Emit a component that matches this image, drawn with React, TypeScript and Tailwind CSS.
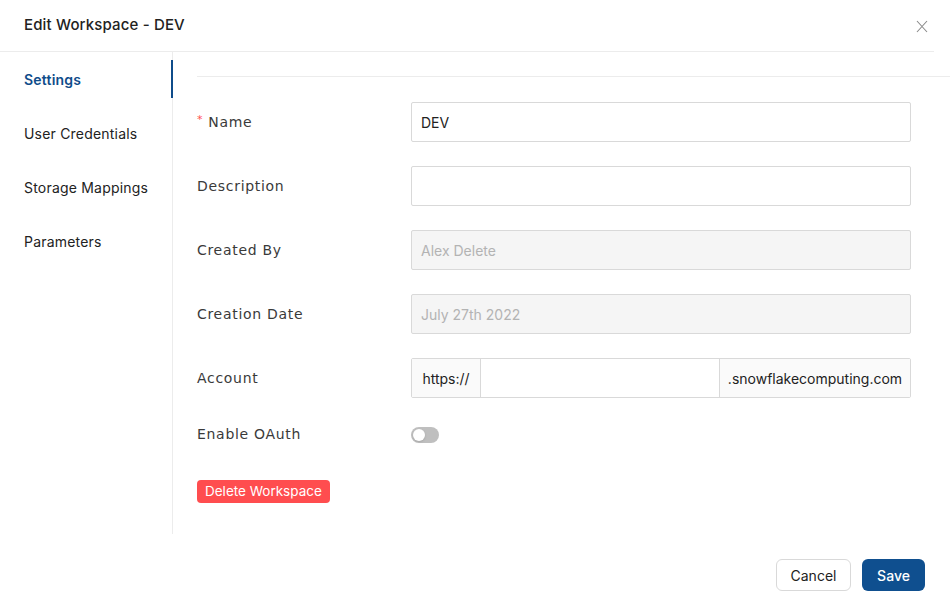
const navItems = ["Settings", "User Credentials", "Storage Mappings", "Parameters"];

const labelCls =
  "w-[214px] shrink-0 text-[14px] tracking-[0.7px] text-[#3a3a3a] font-['DejaVu_Sans',sans-serif]";
const inputCls =
  "h-10 w-[500px] rounded-[2px] border border-[#d9d9d9] px-[9px] text-[14px] text-[#222] outline-none";

const Row = ({ label, required, children }: { label: string; required?: boolean; children: React.ReactNode }) => (
  <div className="flex items-center">
    <div className={labelCls}>
      {required && <span className="mr-[5px] text-[#ff4d4f] text-[11px] align-top">*</span>}
      {label}
    </div>
    {children}
  </div>
);

const App = () => {
  return (
    <div className="h-[611px] w-[950px] bg-white font-['Inter',sans-serif] text-[#222] overflow-hidden">
      <div className="flex h-[52px] w-[934px] items-center justify-between border-b border-[#ececec] pl-6 pr-[6px]">
        <h2 className="text-[15px] font-medium tracking-[0.15px] text-[#222]">Edit Workspace - DEV</h2>
        <svg width="12" height="13" viewBox="0 0 12 13" className="mt-[2px]">
          <path d="M1 1L11 12M11 1L1 12" stroke="#8a8a8a" strokeWidth="1.1" fill="none" />
        </svg>
      </div>

      <div className="flex">
        <nav className="flex h-[482px] w-[173px] shrink-0 flex-col border-r border-[#ececec] pt-[8px]">
          {navItems.map((item, i) => (
            <div
              key={item}
              className={
                i === 0
                  ? "-mr-px flex h-[38px] items-center border-r-2 border-[#0f4c8a] pl-6 text-[14px] font-semibold tracking-[0.2px] text-[#0f4c8a]"
                  : "mt-4 flex h-[38px] items-center pl-6 text-[14px] tracking-[0.2px] text-[#222]"
              }
            >
              {item}
            </div>
          ))}
        </nav>

        <div className="flex-1 pl-6">
          <div className="mt-[24px] border-t border-[#ececec]" />
          <div className="mt-[25px] flex flex-col gap-6">
            <Row label="Name" required>
              <input className={inputCls} defaultValue="DEV" />
            </Row>
            <Row label="Description">
              <input className={inputCls} />
            </Row>
            <Row label="Created By">
              <div className={inputCls + " flex items-center bg-[#f5f5f5] text-[#b3b3b3]"}>Alex Delete</div>
            </Row>
            <Row label="Creation Date">
              <div className={inputCls + " flex items-center bg-[#f5f5f5] text-[#b3b3b3]"}>July 27th 2022</div>
            </Row>
            <Row label="Account">
              <div className="flex h-10 w-[500px] rounded-[2px] border border-[#d9d9d9] text-[14px]">
                <div className="flex w-[69px] items-center justify-center border-r border-[#d9d9d9] bg-[#fafafa]">https://</div>
                <input className="w-[238px] px-2 outline-none" />
                <div className="flex flex-1 items-center justify-center border-l border-[#d9d9d9] bg-[#fafafa]">.snowflakecomputing.com</div>
              </div>
            </Row>
          </div>
          <div className="mt-[26px] flex items-center">
            <div className={labelCls}>Enable OAuth</div>
            <div className="flex h-4 w-7 items-center rounded-full bg-[#bfbfbf] px-[2px]">
              <div className="h-3 w-3 rounded-full bg-white shadow" />
            </div>
          </div>
          <button className="mt-[35px] h-[23px] rounded-[4px] bg-[#ff4d4f] px-[8px] text-[13.5px] leading-[23px] text-white">
            Delete Workspace
          </button>
        </div>
      </div>

      <div className="flex justify-end gap-[11px] pr-[25px] pt-[25px]">
        <button className="h-8 w-[75px] rounded-[6px] border border-[#d9d9d9] text-[14px] text-[#222]">Cancel</button>
        <button className="h-8 w-[63px] rounded-[6px] bg-[#0f4f8f] text-[14px] font-medium text-white">Save</button>
      </div>
    </div>
  );
};

export default App;
